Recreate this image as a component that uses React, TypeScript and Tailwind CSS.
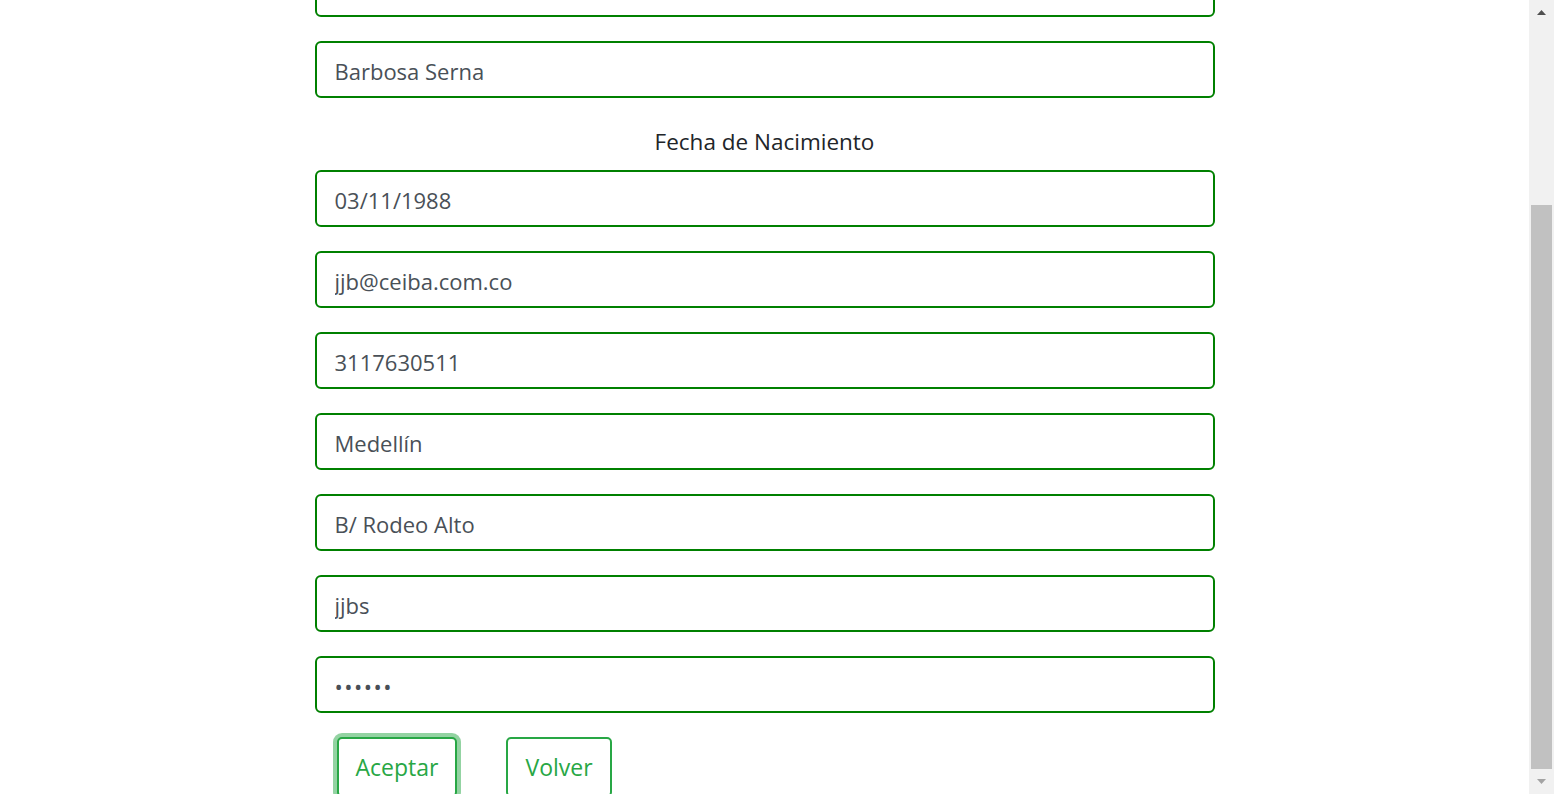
import { useState } from 'react';

const fields = [
  { name: 'apellidos', value: 'Barbosa Serna', type: 'text' },
];

const restFields = [
  { name: 'fechaNacimiento', value: '03/11/1988', type: 'text' },
  { name: 'correo', value: 'jjb@ceiba.com.co', type: 'text' },
  { name: 'telefono', value: '3117630511', type: 'text' },
  { name: 'ciudad', value: 'Medellín', type: 'text' },
  { name: 'direccion', value: 'B/ Rodeo Alto', type: 'text' },
  { name: 'usuario', value: 'jjbs', type: 'text' },
  { name: 'clave', value: 'abcdef', type: 'password' },
];

const inputClass =
  'block w-full h-[57px] rounded-[6px] border-2 border-[#008000] bg-white px-[18px] pt-[3px] text-[22px] text-[#495057] outline-none';

function Field({ value, type }: { value: string; type: string }) {
  const [val, setVal] = useState(value);
  return (
    <input
      type={type}
      value={val}
      onChange={(e) => setVal(e.target.value)}
      className={type === 'password' ? `${inputClass} tracking-[1.5px]` : inputClass}
    />
  );
}

function Scrollbar() {
  return (
    <div className="flex h-screen w-[25px] shrink-0 flex-col bg-[#f1f1f1]">
      {/* up arrow */}
      <div className="flex h-[25px] items-center justify-center">
        <svg width="11" height="7" viewBox="0 0 11 7">
          <path d="M5.5 1 L10 6 L1 6 Z" fill="#505050" />
        </svg>
      </div>
      <div className="flex flex-1 flex-col px-[2px]">
        <div className="h-[180px]" />
        <div className="flex-1 bg-[#c1c1c1]" />
      </div>
      {/* down arrow */}
      <div className="flex h-[25px] items-center justify-center">
        <svg width="11" height="7" viewBox="0 0 11 7">
          <path d="M1 1 L10 1 L5.5 6 Z" fill="#a3a3a3" />
        </svg>
      </div>
    </div>
  );
}

export default function App() {
  return (
    <div
      className="flex h-screen w-full overflow-hidden bg-white"
      style={{ fontFamily: '"Open Sans", "Noto Sans", sans-serif' }}
    >
      <div className="flex-1 overflow-hidden">
        <form className="mx-auto w-[900px]" onSubmit={(e) => e.preventDefault()}>
          {/* partially scrolled out */}
          <div className="-mt-[40px]">
            <Field value="Barbosa" type="text" />
          </div>
          <div className="mt-[24px]">
            {fields.map((f) => (
              <Field key={f.name} value={f.value} type={f.type} />
            ))}
          </div>

          <label className="mt-[28px] mb-[12px] block h-[32px] text-center text-[22.5px] leading-[32px] text-[#212529]">
            Fecha de Nacimiento
          </label>

          <div className="flex flex-col gap-[24px]">
            {restFields.map((f) => (
              <Field key={f.name} value={f.value} type={f.type} />
            ))}
          </div>

          <div className="mt-[24px] flex items-start gap-[49px] pl-[22px]">
            <button
              type="submit"
              className="h-[60px] rounded-[5px] border-2 border-[#28a745] bg-white px-[17px] text-[23px] text-[#28a745] shadow-[0_0_0_4px_rgba(40,167,69,0.5)]"
            >
              Aceptar
            </button>
            <button
              type="button"
              className="h-[60px] rounded-[5px] border-2 border-[#28a745] bg-white px-[17px] text-[23px] text-[#28a745]"
            >
              Volver
            </button>
          </div>
        </form>
      </div>
      <Scrollbar />
    </div>
  );
}
